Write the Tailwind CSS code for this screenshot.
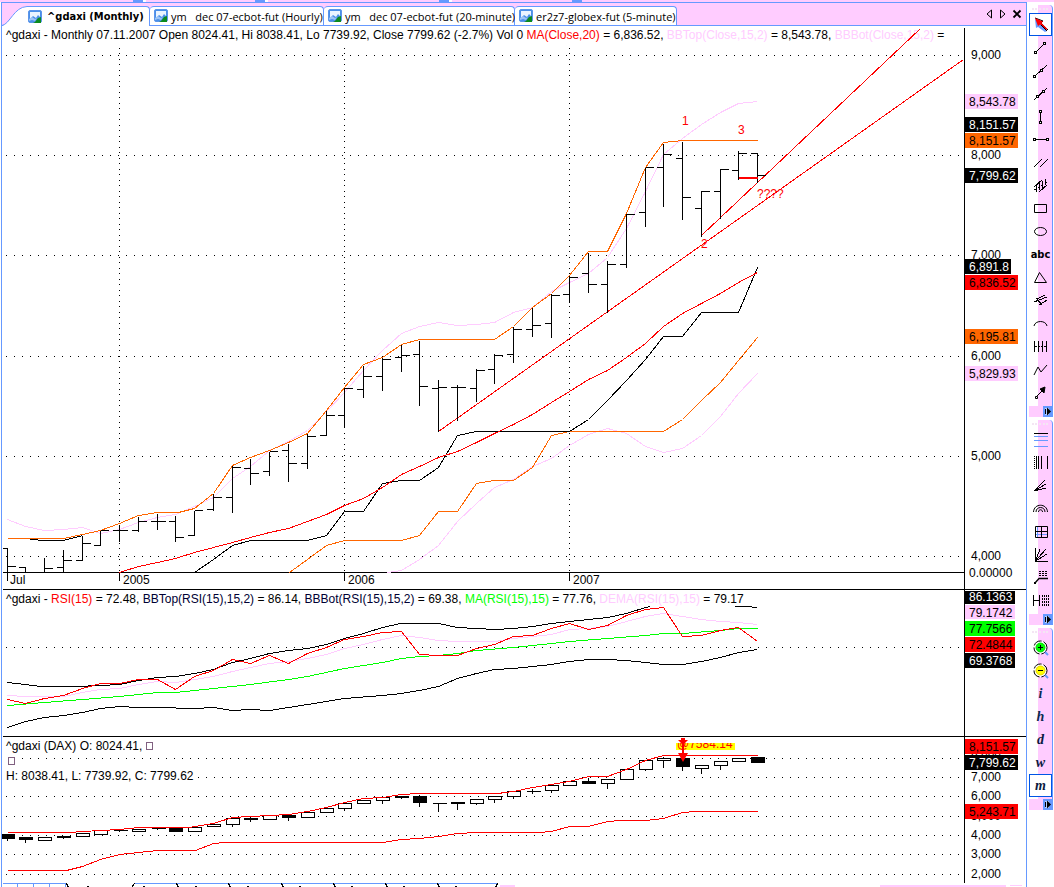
<!DOCTYPE html>
<html lang="en">
<head>
  <meta charset="UTF-8" />
  <meta name="viewport" content="width=device-width, initial-scale=1.0"/>
  <title>^gdaxi (Monthly)</title>
  <script src="https://cdn.jsdelivr.net/npm/@tailwindcss/browser@4"></script>
</head>
<body class="min-h-screen bg-white flex flex-col overflow-hidden text-black text-[12px] leading-[15px] font-['Liberation_Sans',Arial,sans-serif]">

  <!-- shared symbols -->
  <svg class="hidden">
    <symbol id="chartIcon" viewBox="0 0 14 14">
      <rect x="0.5" y="0.5" width="13" height="12" rx="1.5" fill="#4a8fe8" stroke="#5b95ea"/>
      <path d="M2 2h10v5l-2-2-2 3-3-2-3 3z" fill="#eaf4ff"/>
      <path d="M7 12l3-4 3-1v6H5z" fill="#0a8a1e"/>
      <path d="M1 9l3-2 3 2 2-1-2 3-3-1-3 1z" fill="#9cc4f5"/>
    </symbol>
    <symbol id="more" viewBox="0 0 9 11">
      <path d="M3 2v7M5 2v7" stroke="#fff"/>
      <path d="M4 1.500v8L8 5.500z" fill="#000"/>
      <path d="M2.500 3v5" stroke="#000"/>
    </symbol>
  </svg>

  <div class="flex h-[2px] bg-[#ffccff]">
    <div class="w-[133px]"></div>
    <div class="w-[10px] bg-[#6699ff]"></div>
    <div class="w-[3px] bg-white"></div>
    <div class="w-[109px]"></div>
    <div class="w-[10px] bg-[#6699ff]"></div>
    <div class="w-[3px] bg-white"></div>
    <div class="w-[171px]"></div>
    <div class="w-[10px] bg-[#6699ff]"></div>
    <div class="w-[3px] bg-white"></div>
    <div class="w-[120px]"></div>
    <div class="w-[10px] bg-[#6699ff]"></div>
  </div>

  <div class="flex flex-1">
    <main class="flex-1 min-w-0 ml-px border-x border-t border-[#6699ff] flex flex-col">

      <!-- document tabs -->
      <div class="flex items-end h-[23px] bg-[#ffccff] border-b border-[#6699ff] text-[11px] font-['Open_Sans',sans-serif]">
        <svg class="w-[25px] h-[20px] -mb-px" viewBox="0 0 25 20">
          <path d="M0 20C8 18 12 1 25 0.500V20z" fill="#fff"/>
          <path d="M0 19.500C8 18 12 1 25 0.500" fill="none" stroke="#6699ff"/>
        </svg>
        <button class="flex items-center gap-[5px] h-[20px] -mb-px w-[123px] pl-[1px] bg-white border-t border-r border-[#6699ff] rounded-tr font-bold whitespace-nowrap font-['DejaVu_Sans_Condensed',sans-serif]"><svg class="w-[14px] h-[14px] shrink-0"><use href="#chartIcon"/></svg><span>^gdaxi (Monthly)</span></button>
        <button class="flex items-center gap-[3px] h-[19px] w-[174px] pl-[4px] bg-white border-t border-r border-[#6699ff] rounded-t whitespace-pre"><svg class="w-[14px] h-[14px] shrink-0"><use href="#chartIcon"/></svg><span>ym   dec 07-ecbot-fut (Hourly)</span></button>
        <button class="flex items-center gap-[3px] h-[19px] w-[191px] pl-[4px] bg-white border-t border-r border-[#6699ff] rounded-t whitespace-pre"><svg class="w-[14px] h-[14px] shrink-0"><use href="#chartIcon"/></svg><span>ym   dec 07-ecbot-fut (20-minute)</span></button>
        <button class="flex items-center gap-[3px] h-[19px] w-[162px] pl-[4px] bg-white border-t border-r border-[#6699ff] rounded-t whitespace-pre"><svg class="w-[14px] h-[14px] shrink-0"><use href="#chartIcon"/></svg><span>er2z7-globex-fut (5-minute)</span></button>
        <div class="flex items-center self-center ml-auto pr-[4px] gap-[4px]">
          <button aria-label="Previous tab"><svg class="w-[10px] h-[10px]" viewBox="0 0 10 10"><path d="M7.500 1v8L3 5z" fill="none" stroke="#000"/></svg></button>
          <button aria-label="Next tab"><svg class="w-[10px] h-[10px]" viewBox="0 0 10 10"><path d="M2.500 1v8L7 5z" fill="none" stroke="#000"/></svg></button>
          <button aria-label="Close"><svg class="w-[10px] h-[10px]" viewBox="0 0 10 10"><path d="M1.500 1.500l7 7M8.500 1.500l-7 7" stroke="#000" stroke-width="1.800"/></svg></button>
        </div>
      </div>

      <!-- price -->
      <section class="relative">
        <h2 class="absolute left-[4px] top-[2px] whitespace-nowrap">^gdaxi - Monthly 07.11.2007 Open 8024.41, Hi 8038.41, Lo 7739.92, Close 7799.62 (-2.7%) Vol 0 <span class="text-[#ff0000]">MA(Close,20)</span> = 6,836.52, <span class="text-[#ffccff]">BBTop(Close,15,2)</span> = 8,543.78, <span class="text-[#ffccff]">BBBot(Close,15,2)</span> =</h2>
        <svg class="relative block w-full h-auto" viewBox="2 26 1024 563" role="img" aria-label="^gdaxi monthly price">
          <g transform="translate(.5 .5)" fill="none" stroke="#000" shape-rendering="crispEdges">
            <path d="M5.500 55H962M5.500 155H962M5.500 255H962M5.500 356H962M5.500 456H962M5.500 556H962" stroke-dasharray="1 7"/>
            <path d="M119 47.500V571M344 47.500V571M569 47.500V571" stroke-dasharray="1 4 1 5"/>
            <path d="M2 572H964M964 27V589M7 572v8M119 572v8M344 572v8M569 572v8"/>
            <path d="M30 539L44 540L63 540L82 535"/>
            <polyline stroke="#ffccff" points="7,519 25,526 44,530 63,529 82,527 100,533 119,529 138,522 157,517 175,514 194,506 213,497 232,478 250,466 269,450 288,441 307,430 326,411 344,392 363,370 382,350 401,333 419,326 438,322 457,325 476,324 494,322 513,312 532,307 551,291 569,282 588,273 607,257 626,228 645,191 663,154 682,138 701,124 720,112 738,103 757,101"/>
            <polyline stroke="#ffccff" points="387,572 401,570 419,559 438,545 457,521 476,503 494,487 513,479 532,466 551,458 569,445 588,434 607,428 626,433 645,446 663,452 682,448 701,435 720,416 738,393 757,373"/>
            <polyline stroke="#ff6600" points="7,538 63,538 82,534 100,530 119,523 138,515 157,512 178,512 194,508 213,493 232,465 250,457 269,450 288,442 307,433 326,410 344,387 363,364 382,357 401,344 419,339 494,339 513,326 532,307 551,293 569,275 588,251 607,251 626,213 645,167 663,142 682,140 757,140"/>
            <polyline stroke="#ff6600" points="289,572 307,559 326,545 344,540 401,540 419,535 438,511 457,511 476,483 494,480 513,480 532,467 551,435 569,431 663,431 682,419 701,400 720,382 738,360 757,337"/>
            <polyline points="194,572 213,559 232,545 250,540 307,540 326,535 344,511 363,511 382,483 401,480 419,480 438,467 457,435 476,431 569,431 588,419 607,400 626,380 645,359 663,336 682,336 701,312 738,312 757,267"/>
            <polyline stroke="#ff0000" points="119,572 138,566 157,562 175,558 194,552 213,547 232,542 250,537 269,532 288,528 307,521 326,514 344,505 363,498 382,487 401,474 419,466 438,457 457,451 476,442 494,433 513,424 532,414 551,402 569,391 588,379 607,370 626,357 645,343 663,326 682,313 701,303 720,293 738,282 757,272"/>
            <path stroke="#ff0000" d="M438 431L963 59M701 235L920 28"/>
            <path id="priceBars"/>
            <path d="M738 177.500H757" stroke="#ff0000" stroke-width="2"/>
          </g>
          <g fill="#ff0000">
            <text x="682" y="125">1</text>
            <text x="738" y="134">3</text>
            <text x="701" y="248">2</text>
            <text x="757" y="198">????</text>
          </g>
          <g>
            <text x="10" y="584">Jul</text>
            <text x="123" y="584">2005</text>
            <text x="348" y="584">2006</text>
            <text x="573" y="584">2007</text>
            <text x="971" y="59">9,000</text>
            <text x="971" y="159">8,000</text>
            <text x="971" y="259">7,000</text>
            <text x="971" y="360">6,000</text>
            <text x="971" y="460">5,000</text>
            <text x="971" y="560">4,000</text>
            <text x="969" y="577">0.00000</text>
          </g>
          <g>
            <rect x="965" y="94" width="53" height="15" fill="#ffccff"/><text x="969" y="106">8,543.78</text>
            <rect x="965" y="117" width="53" height="15"/><text x="969" y="129" fill="#fff">8,151.57</text>
            <rect x="965" y="133" width="53" height="15" fill="#ff6600"/><text x="969" y="145">8,151.57</text>
            <rect x="965" y="168" width="53" height="15"/><text x="969" y="180" fill="#fff">7,799.62</text>
            <rect x="965" y="259" width="46" height="15"/><text x="969" y="271" fill="#fff">6,891.8</text>
            <rect x="965" y="275" width="53" height="15" fill="#ff0000"/><text x="969" y="287">6,836.52</text>
            <rect x="965" y="329" width="53" height="15" fill="#ff6600"/><text x="969" y="341">6,195.81</text>
            <rect x="965" y="366" width="53" height="15" fill="#ffccff"/><text x="969" y="378">5,829.93</text>
          </g>
        </svg>
      </section>

      <!-- RSI -->
      <section class="relative">
        <h2 class="absolute left-[4px] top-[3px] whitespace-nowrap">^gdaxi - <span class="text-[#ff0000]">RSI(15)</span> = 72.48, <span class="text-[#000033]">BBTop(RSI(15),15,2)</span> = 86.14, <span class="text-[#000033]">BBBot(RSI(15),15,2)</span> = 69.38, <span class="text-[#00ff00]">MA(RSI(15),15)</span> = 77.76, <span class="text-[#ffccff]">DEMA(RSI(15),15)</span> = 79.17</h2>
        <svg class="relative block w-full h-auto" viewBox="2 589 1024 147" role="img" aria-label="RSI">
          <g transform="translate(.5 .5)" fill="none" stroke="#000" shape-rendering="crispEdges">
            <path d="M2 589H1025M964 589V736"/>
            <path d="M5.500 647H962" stroke-dasharray="1 7"/>
            <polyline points="7,682 25,684 40,686 75,686 100,685 119,684 138,680 157,677 175,676 194,673 213,669 232,662 250,658 269,653 288,650 307,648 326,644 344,638 363,633 382,627 400,623 438,623 457,627 476,628 494,629 513,628 532,626 551,623 569,621 588,619 607,617 626,613 645,607 650,606"/>
            <polyline points="734,606 745,606 757,607"/>
            <polyline points="7,727 25,721 44,717 63,715 82,712 100,708 119,706 138,707 157,707 194,708 213,707 232,710 250,709 269,710 288,707 307,704 326,701 344,698 382,695 401,693 419,690 438,686 457,678 476,673 494,669 513,668 532,666 551,664 569,661 588,659 607,659 626,660 645,662 663,664 682,664 701,661 720,657 738,652 757,649"/>
            <polyline stroke="#ffccff" points="7,695 25,696 63,696 82,692 100,689 119,688 138,684 157,681 175,682 194,679 213,676 232,671 250,667 269,663 288,661 307,658 326,654 344,648 363,644 382,639 401,635 419,637 438,640 457,641 494,641 513,638 532,636 551,634 569,629 588,628 607,626 626,621 645,616 663,613 682,616 701,619 720,621 738,622 757,624"/>
            <polyline stroke="#00ff00" points="7,705 44,702 82,699 119,696 157,692 175,692 213,688 250,684 288,679 307,676 344,668 382,662 401,658 419,656 438,655 457,653 476,650 513,647 551,643 569,641 607,638 645,635 663,633 682,633 720,630 738,628 757,628"/>
            <polyline stroke="#ff0000" points="7,699 25,703 44,698 63,695 82,688 100,683 119,683 138,679 157,679 175,689 194,676 213,670 232,659 250,663 269,655 288,663 307,653 326,647 344,639 363,636 382,632 401,631 419,654 438,655 457,655 476,648 494,644 513,636 532,635 551,628 569,623 588,629 607,625 626,615 645,609 663,607 682,636 701,635 720,630 738,627 757,641"/>
          </g>
          <g>
            <rect x="965" y="591" width="50" height="13"/><text x="969" y="601" fill="#fff">86.1363</text>
            <rect x="965" y="605" width="50" height="14" fill="#ffccff"/><text x="969" y="617">79.1742</text>
            <rect x="965" y="621" width="50" height="15" fill="#00ff00"/><text x="969" y="633">77.7566</text>
            <rect x="965" y="637" width="50" height="15" fill="#ff0000"/><text x="969" y="649">72.4844</text>
            <rect x="965" y="653" width="50" height="15"/><text x="969" y="665" fill="#fff">69.3768</text>
          </g>
        </svg>
      </section>

      <!-- candles -->
      <section class="relative">
        <div class="absolute left-[4px] top-[3px] whitespace-nowrap">
          <p>^gdaxi (DAX) O: 8024.41, <span class="inline-block w-[7px] h-[8px] border border-[#806080]"></span></p>
          <p><span class="inline-block w-[7px] h-[8px] ml-[2px] border border-[#806080]"></span></p>
          <p>H: 8038.41, L: 7739.92, C: 7799.62</p>
        </div>
        <svg class="relative block w-full h-auto" viewBox="2 736 1024 147" role="img" aria-label="^gdaxi candles">
          <clipPath id="belowEdge"><rect x="670" y="743" width="80" height="12"/></clipPath>
          <g transform="translate(.5 .5)" fill="none" stroke="#000" shape-rendering="crispEdges">
            <path d="M2 736H1025M964 736V883"/>
            <path d="M21.500 758H962M197.500 777H962M5.500 796H962M5.500 816H962M5.500 835H962M5.500 854H962M5.500 874H962" stroke-dasharray="1 7"/>
            <path id="wicks"/>
            <path id="upBodies" fill="#fff"/>
            <path id="downBodies" fill="#000"/>
            <polyline stroke="#ff0000" points="7,832 70,832 82,831 119,829 138,827 188,827 213,823 232,817 250,816 269,815 288,814 307,811 326,807 344,802 363,798 382,797 401,794 419,793 497,793 513,791 532,787 551,784 569,781 588,776 607,776 626,769 645,760 663,755 757,755"/>
            <polyline stroke="#ff0000" points="7,870 66,870 82,866 100,859 119,854 138,852 157,850 195,850 213,843 225,842 382,842 401,839 419,838 438,836 457,833 476,832 538,832 551,831 569,826 588,826 607,821 620,820 645,820 663,818 682,812 695,811 757,811"/>
          </g>
          <rect x="676" y="743" width="59" height="7" fill="#ffff00"/>
          <text x="677" y="748" fill="#ff0000" clip-path="url(#belowEdge)">@7584.14</text>
          <path d="M678 740h3v-2h4v2h3l-4 4v9h4l-5 9-5-9h4v-9z" fill="#ff0000"/>
          <g>
            <text x="971" y="761">8,000</text>
            <text x="971" y="781">7,000</text>
            <text x="971" y="800">6,000</text>
            <text x="971" y="820">5,000</text>
            <text x="971" y="839">4,000</text>
            <text x="971" y="858">3,000</text>
            <text x="971" y="878">2,000</text>
            <rect x="965" y="739" width="53" height="15" fill="#ff0000"/><text x="969" y="751">8,151.57</text>
            <rect x="965" y="755" width="53" height="15"/><text x="969" y="767" fill="#fff">7,799.62</text>
            <rect x="965" y="804" width="53" height="15" fill="#ff0000"/><text x="969" y="816">5,243.71</text>
          </g>
        </svg>
      </section>

      <!-- top edge of the sheet tabs -->
      <svg class="block w-full h-[4px]" viewBox="2 883 1024 4" preserveAspectRatio="xMinYMin slice" aria-hidden="true">
        <g transform="translate(.5 .5)" fill="none" stroke="#6699ff" shape-rendering="crispEdges">
          <path d="M2 883H66M134 883H497M17 883v4M33 883v4M49 883v4M65 883v4"/>
          <path stroke="#000" d="M66 883l2 4M134 883l-3 4M176 883l2 4M228 883l2 4M281 883l2 4M333 883l2 4M385 883l2 4M437 883l2 4M497 883l-2 4M86 886h2M142 886h2M194 886h2M246 886h2M298 886h2M350 886h2M402 886h2M454 886h2"/>
        </g>
        <path d="M500 885h15v2H500zM880 885h126v2H880zM1010 885h12v1h-12z" fill="#ffccff"/>
      </svg>
    </main>

    <!-- drawing tools -->
    <aside class="w-[27px] shrink-0 pl-[2px] pt-[3px] flex flex-col gap-[3px]">
      <div class="w-[24px] rounded-tr border-r border-[#6699ff] bg-[linear-gradient(90deg,#fff_9px,#ffccff_9px)]">
        <div class="h-[8px] pt-[3px] pl-[3px]"><div class="w-[16px] border-t-2 border-dotted border-[#f4e6f4]"></div></div>
        <div class="flex flex-col">
          <button aria-label="Select" class="w-[23px] h-[23px] flex items-center justify-center border border-[#0055e5] bg-white"><svg class="w-[16px] h-[16px]" viewBox="0 0 16 16"><path d="M2 2l1 9 2-1 7 5 2-1-6-7z" fill="#6699ff"/><path d="M2 1l8 3-2 2 7 7" fill="none" stroke="#000"/><path d="M2 1l8 3.500L8.500 6l6 6-1.500 1-6-5.500L5 9z" fill="#ff0000"/><path d="M8 8l6 6" stroke="#000"/></svg></button>
          <button aria-label="Trend line" class="h-[23px] flex items-center justify-center"><svg class="w-[16px] h-[16px]" viewBox="0 0 16 16" fill="none" stroke="#000" shape-rendering="crispEdges"><path d="M4 11l7-7"/><path d="M1.500 11.500h2v2h-2zM10.500 2.500h2v2h-2z" fill="#fff"/></svg></button>
          <button aria-label="Ray" class="h-[23px] flex items-center justify-center"><svg class="w-[16px] h-[16px]" viewBox="0 0 16 16" fill="none" stroke="#000" shape-rendering="crispEdges"><path d="M2 13L14 2"/><path d="M0.500 12.500h2v2h-2zM7.500 6.500h2v2h-2z" fill="#fff"/></svg></button>
          <button aria-label="Extended line" class="h-[23px] flex items-center justify-center"><svg class="w-[16px] h-[16px]" viewBox="0 0 16 16" fill="none" stroke="#000" shape-rendering="crispEdges"><path d="M1 14L14 2"/><path d="M3.500 9.500h2v2h-2zM9.500 4.500h2v2h-2z" fill="#fff"/></svg></button>
          <button aria-label="Vertical line" class="h-[23px] flex items-center justify-center"><svg class="w-[16px] h-[16px]" viewBox="0 0 16 16" fill="none" stroke="#000" shape-rendering="crispEdges"><path d="M7.500 3v10"/><path d="M6.500 1.500h2v2h-2zM6.500 12.500h2v2h-2z" fill="#fff"/></svg></button>
          <button aria-label="Horizontal line" class="h-[23px] flex items-center justify-center"><svg class="w-[16px] h-[16px]" viewBox="0 0 16 16" fill="none" stroke="#000" shape-rendering="crispEdges"><path d="M2 7.500h12"/><path d="M0.500 6.500h2v2h-2zM13.500 6.500h2v2h-2z" fill="#fff"/></svg></button>
          <button aria-label="Parallel lines" class="h-[23px] flex items-center justify-center"><svg class="w-[16px] h-[16px]" viewBox="0 0 16 16" fill="none" stroke="#000" shape-rendering="crispEdges"><path d="M1 12l8-8M7 12l8-8"/></svg></button>
          <button aria-label="Regression channel" class="h-[23px] flex items-center justify-center"><svg class="w-[16px] h-[16px]" viewBox="0 0 16 16" fill="none" stroke="#000" shape-rendering="crispEdges"><path d="M1 9l8-7M6 14l8-7"/><path d="M3.500 6v8M6.500 4v8M9.500 3v8M12.500 1v6M1 11h2M5 9h1.500M8 7h1.500M12.500 4H14"/></svg></button>
          <button aria-label="Rectangle" class="h-[23px] flex items-center justify-center"><svg class="w-[16px] h-[16px]" viewBox="0 0 16 16" fill="none" stroke="#000"><path d="M1.500 3.500h12v8h-12z"/></svg></button>
          <button aria-label="Ellipse" class="h-[23px] flex items-center justify-center"><svg class="w-[16px] h-[16px]" viewBox="0 0 16 16" fill="none" stroke="#000"><ellipse cx="7.500" cy="7.500" rx="6" ry="4"/></svg></button>
          <button class="h-[23px] flex items-center justify-center text-[11px] font-bold font-['DejaVu_Sans_Condensed',sans-serif]">abc</button>
          <button aria-label="Triangle" class="h-[23px] flex items-center justify-center"><svg class="w-[16px] h-[16px]" viewBox="0 0 16 16" fill="none" stroke="#000"><path d="M6.500 2.500L1.500 12.500h12z"/></svg></button>
          <button aria-label="Pitchfork" class="h-[23px] flex items-center justify-center"><svg class="w-[16px] h-[16px]" viewBox="0 0 16 16" fill="none" stroke="#000" shape-rendering="crispEdges"><path d="M4 6l8-4M1 9l13-5M6 12l8-5M3 5l6 7"/></svg></button>
          <button aria-label="Arc" class="h-[23px] flex items-center justify-center"><svg class="w-[16px] h-[16px]" viewBox="0 0 16 16" fill="none" stroke="#000"><path d="M1 10c1-6 12-6 13 0"/></svg></button>
          <button aria-label="Cycle lines" class="h-[23px] flex items-center justify-center"><svg class="w-[16px] h-[16px]" viewBox="0 0 16 16" fill="none" stroke="#000"><path d="M1.500 2v11M5.500 2v11M9.500 2v11M13.500 2v11"/><path d="M2 7.500h12" stroke-dasharray="2 1"/></svg></button>
          <button aria-label="Zigzag" class="h-[23px] flex items-center justify-center"><svg class="w-[16px] h-[16px]" viewBox="0 0 16 16" fill="none" stroke="#000"><path d="M1 13l4-8 3 5 6-7"/></svg></button>
          <button aria-label="Arrow" class="h-[23px] flex items-center justify-center"><svg class="w-[16px] h-[16px]" viewBox="0 0 16 16" fill="none" stroke="#000"><path d="M4 11l6-6"/><path d="M2.500 11.500h2v2h-2z" fill="#fff"/><path d="M7 4l5-2-1 6z" fill="#000"/></svg></button>
        </div>
        <div class="h-[2px]"></div>
        <div class="flex justify-end h-[11px] -mr-px bg-[#ffccff]"><button aria-label="More drawing tools" class="w-[10px] h-[11px] bg-[#6699ff]"><svg class="w-[9px] h-[11px]"><use href="#more"/></svg></button></div>
      </div>

      <div class="w-[24px] rounded-tr border-r border-[#6699ff] bg-[linear-gradient(90deg,#fff_9px,#ffccff_9px)]">
        <div class="h-[8px] pt-[3px] pl-[3px]"><div class="w-[16px] border-t-2 border-dotted border-[#f4e6f4]"></div></div>
        <div class="flex flex-col">
          <button aria-label="Fibonacci retracement" class="h-[23px] flex items-center justify-center"><svg class="w-[16px] h-[16px]" viewBox="0 0 16 16" fill="none" stroke="#6699ff"><path d="M1 1.500h14" stroke="#000"/><path d="M1 4.500h14M1 8.500h14M1 14.500h14"/></svg></button>
          <button aria-label="Fibonacci time" class="h-[23px] flex items-center justify-center"><svg class="w-[16px] h-[16px]" viewBox="0 0 16 16" fill="none" stroke="#000"><path d="M1.500 1v13" stroke-dasharray="1 1"/><path d="M3.500 1v13M5.500 1v13M8.500 1v13M14.500 1v13"/></svg></button>
          <button aria-label="Speed lines" class="h-[23px] flex items-center justify-center"><svg class="w-[16px] h-[16px]" viewBox="0 0 16 16" fill="none" stroke="#000" shape-rendering="crispEdges"><path d="M1 13L12 2M1 13l12-7M1 13l12-3"/></svg></button>
          <button aria-label="Fibonacci arcs" class="h-[23px] flex items-center justify-center"><svg class="w-[16px] h-[16px]" viewBox="0 0 16 16" fill="none" stroke="#000"><path d="M0.500 11C1 2 14 2 14.500 11M3 11c0-6 9-6 9 0M5.500 11c0-3 4-3 4 0"/></svg></button>
          <button aria-label="Gann grid" class="h-[23px] flex items-center justify-center"><svg class="w-[16px] h-[16px]" viewBox="0 0 16 16" fill="none" stroke="#000"><path d="M4.500 2v12M2 10.500h12" stroke="#6699ff"/><path d="M2.500 2.500h12v11h-12zM8.500 2.500v11M2.500 7.500h12"/></svg></button>
          <button aria-label="Gann fan" class="h-[23px] flex items-center justify-center"><svg class="w-[16px] h-[16px]" viewBox="0 0 16 16" fill="none" stroke="#000" shape-rendering="crispEdges"><path d="M2.500 1v13.500H15M2.500 14L7 2M2.500 14L13 2M2.500 14L14 7"/></svg></button>
          <button aria-label="Text note" class="h-[23px] flex items-center justify-center"><svg class="w-[16px] h-[16px]" viewBox="0 0 16 16" fill="none" stroke="#000"><path d="M6 1.500h9M6 3.500h9M6 5.500h9" stroke-dasharray="2 1"/><path d="M15 8.500H6L2 13" stroke-width="1.300"/><path d="M1 12h2v2H1z" fill="#000" stroke="none"/></svg></button>
          <button aria-label="Projection" class="h-[23px] flex items-center justify-center"><svg class="w-[16px] h-[16px]" viewBox="0 0 16 16" fill="none" stroke="#000"><path d="M0.500 2v11M6.500 2v11M1 7.500h6"/><path d="M9.500 2v11M11.500 2v11M13.500 2v11M15.500 2v11" stroke-dasharray="2 1"/></svg></button>
        </div>
        <div class="h-[2px]"></div>
        <div class="flex justify-end h-[11px] -mr-px bg-[#ffccff]"><button aria-label="More studies" class="w-[10px] h-[11px] bg-[#6699ff]"><svg class="w-[9px] h-[11px]"><use href="#more"/></svg></button></div>
      </div>

      <div class="w-[24px] rounded-tr border-r border-[#6699ff] bg-[linear-gradient(90deg,#fff_9px,#ffccff_9px)]">
        <div class="h-[8px] pt-[3px] pl-[3px]"><div class="w-[16px] border-t-2 border-dotted border-[#f4e6f4]"></div></div>
        <div class="flex flex-col text-[14px] font-bold italic font-['Liberation_Serif',serif]">
          <button aria-label="Zoom in" class="h-[23px] flex items-center justify-center"><svg class="w-[16px] h-[16px]" viewBox="0 0 16 16" fill="none" stroke="#000"><circle cx="7.500" cy="7.500" r="6.500" fill="#fff" stroke-dasharray="9 2"/><circle cx="7.500" cy="7.500" r="4.500" fill="#00ff00" stroke="#00e000"/><path d="M7.500 5v5M5 7.500h5"/><path d="M12 12l3 3" stroke="#6699ff" stroke-width="2"/></svg></button>
          <button aria-label="Zoom out" class="h-[23px] flex items-center justify-center"><svg class="w-[16px] h-[16px]" viewBox="0 0 16 16" fill="none" stroke="#000"><circle cx="7.500" cy="7.500" r="6.500" fill="#fff" stroke-dasharray="9 2"/><circle cx="7.500" cy="7.500" r="4.500" fill="#ffff00" stroke="#e8d800"/><path d="M5 7.500h5"/><path d="M12 12l3 3" stroke="#6699ff" stroke-width="2"/></svg></button>
          <button class="h-[23px] text-[#0a2a50]">i</button>
          <button class="h-[23px] text-[#0a2a50]">h</button>
          <button class="h-[23px] text-[#0a1a40]">d</button>
          <button class="h-[23px] text-[#0a1a40]">w</button>
          <button class="w-[23px] h-[23px] text-[#0a1a40] border border-[#0055e5] bg-white">m</button>
        </div>
        <div class="h-[2px]"></div>
        <div class="flex justify-end h-[11px] -mr-px bg-[#ffccff]"><button aria-label="More periods" class="w-[10px] h-[11px] bg-[#6699ff]"><svg class="w-[9px] h-[11px]"><use href="#more"/></svg></button></div>
      </div>
    </aside>
  </div>

  <script>
    // x, high, low, open, close
    const bars = [
      [7, 547, 571, 548, 566], [25, 567, 571, 567, null], [44, 557, 571, null, 568], [63, 549, 571, 567, 560],
      [82, 535, 560, 560, 543], [100, 530, 545, 545, 530], [119, 524, 541, 530, 530], [138, 516, 531, 530, 521],
      [157, 513, 529, 521, 521], [175, 515, 541, 521, 537], [194, 510, 535, 535, 510], [213, 493, 510, 509, 497],
      [232, 465, 512, 497, 467], [250, 458, 484, 468, 473], [269, 451, 475, 471, 451], [288, 443, 481, 450, 463],
      [307, 433, 468, 463, 436], [326, 410, 435, 435, 415], [344, 387, 427, 415, 388], [363, 365, 397, 389, 376],
      [382, 357, 390, 376, 359], [401, 344, 371, 357, 355], [419, 340, 405, 354, 386], [438, 379, 431, 388, 387],
      [457, 384, 420, 387, 387], [476, 368, 401, 388, 370], [494, 353, 383, 369, 355], [513, 326, 362, 354, 329],
      [532, 307, 336, 329, 325], [551, 293, 337, 323, 295], [569, 275, 302, 294, 277], [588, 252, 292, 273, 284],
      [607, 260, 312, 284, 264], [626, 213, 267, 264, 214], [645, 167, 226, 212, 167], [663, 143, 206, 167, 154],
      [682, 141, 219, 158, 197], [701, 190, 236, 208, 191], [720, 168, 218, 191, 169], [738, 150, 179, 170, 153],
      [757, 152, 182, 153, 175]
    ];
    document.getElementById("priceBars").setAttribute("d", bars.map(([x, h, l, o, c]) =>
      `M${x} ${h}V${l}` + (o ? `M${Math.max(x - 7, 2)} ${o}H${x}` : "") + (c ? `M${x} ${c}h8` : "")
    ).join(""));

    // x, body top, body bottom, high, low, down
    const candles = [
      [7, 834, 838, 834, 840, 1], [25, 837, 839, 837, 842, 1], [44, 837, 840, 836, 840, 0], [63, 836, 837, 835, 838, 1],
      [82, 833, 836, 832, 836, 0], [100, 830, 834, 830, 834, 0], [119, 830, 830, 829, 831, 1], [138, 829, 831, 828, 831, 0],
      [157, 828, 828, 827, 829, 1], [175, 828, 831, 828, 831, 1], [194, 827, 831, 827, 831, 0], [213, 824, 826, 823, 826, 0],
      [232, 818, 824, 818, 826, 0], [250, 818, 819, 816, 821, 1], [269, 815, 819, 815, 819, 0], [288, 815, 817, 814, 820, 1],
      [307, 812, 817, 812, 817, 0], [326, 808, 812, 808, 812, 0], [344, 803, 808, 803, 810, 0], [363, 800, 803, 799, 803, 0],
      [382, 797, 800, 797, 803, 0], [401, 796, 797, 795, 798, 1], [419, 796, 802, 794, 806, 1], [438, 803, 803, 802, 811, 1],
      [457, 802, 803, 802, 809, 1], [476, 799, 803, 799, 804, 0], [494, 796, 799, 796, 802, 0], [513, 791, 796, 791, 798, 0],
      [532, 791, 791, 788, 793, 1], [551, 785, 790, 785, 792, 0], [569, 781, 785, 781, 785, 0], [588, 781, 783, 777, 783, 1],
      [607, 779, 783, 779, 788, 0], [626, 769, 779, 769, 779, 0], [645, 760, 769, 760, 770, 0], [663, 758, 760, 756, 767, 0],
      [682, 758, 766, 758, 770, 1], [701, 765, 768, 765, 773, 0], [720, 761, 765, 761, 769, 0], [738, 758, 761, 758, 761, 0],
      [757, 757, 762, 757, 762, 1]
    ];
    const body = ([x, t, b]) => b > t
      ? `M${Math.max(x - 6, 2)} ${t}H${x + 7}V${b}H${Math.max(x - 6, 2)}z`
      : `M${x - 6} ${t}h14`;
    document.getElementById("wicks").setAttribute("d", candles.map(([x, , , h, l]) => `M${x} ${h}V${l}`).join(""));
    document.getElementById("upBodies").setAttribute("d", candles.filter(c => !c[5]).map(body).join(""));
    document.getElementById("downBodies").setAttribute("d", candles.filter(c => c[5]).map(body).join(""));
  </script>
</body>
</html>
